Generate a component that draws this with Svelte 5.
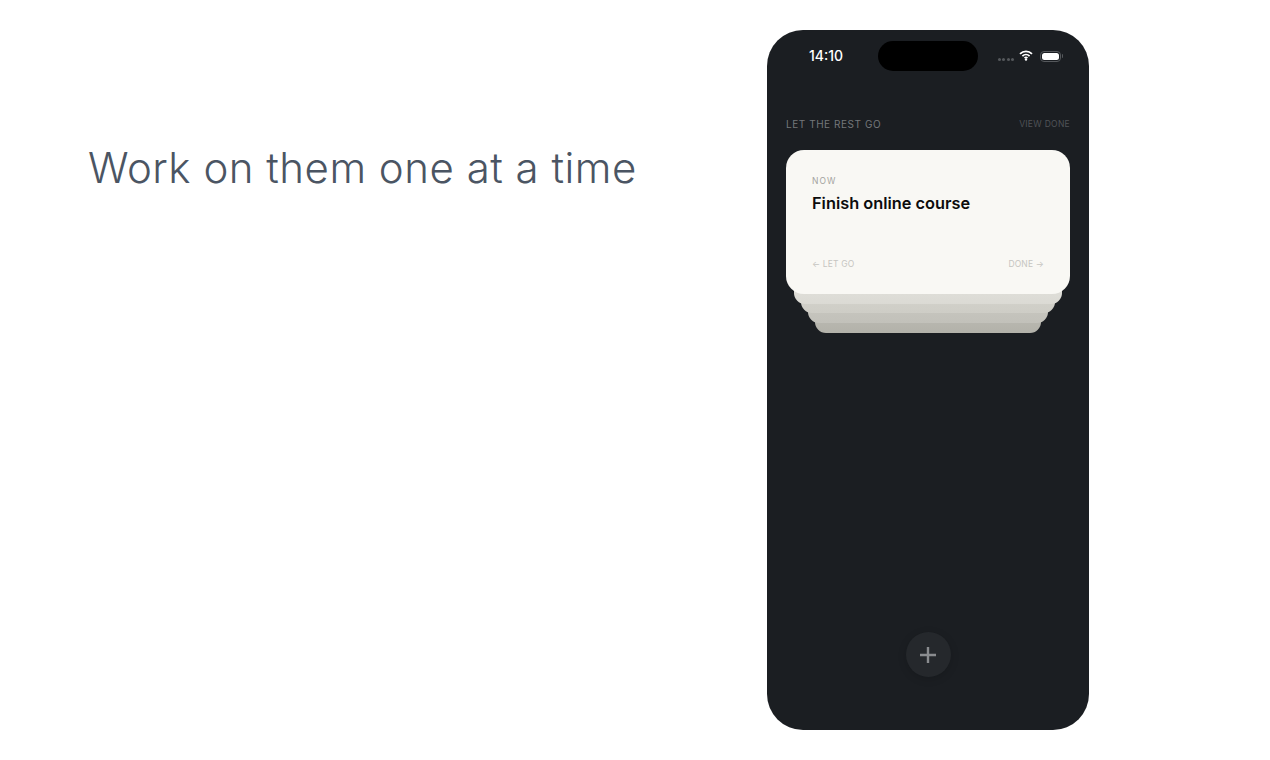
<script lang="ts">
  const layers = [
    { inset: 8, from: '#e4e3dd', to: '#dbdad4' },
    { inset: 15, from: '#d6d5ce', to: '#cecdc6' },
    { inset: 22, from: '#cac9c2', to: '#c2c1ba' },
    { inset: 29, from: '#bebdb6', to: '#b3b2aa' }
  ];
</script>

<div class="page">
  <section class="intro">
    <h1>Work on them one at a time</h1>
  </section>

  <div class="phone">
    <div class="status">
      <span class="time">14:10</span>
      <div class="island"></div>
      <div class="status-icons">
        <span class="signal"><i></i><i></i><i></i><i></i></span>
        <svg class="wifi" viewBox="0 0 14 11" aria-hidden="true">
          <path d="M1 3.8a8.6 8.6 0 0 1 12 0" />
          <path d="M3.4 6.1a5.2 5.2 0 0 1 7.2 0" />
          <path d="M5.6 8.2a2 2 0 0 1 2.8 0" />
          <circle cx="7" cy="9.6" r="1.2" />
        </svg>
        <span class="battery"><span class="level"></span></span>
      </div>
    </div>

    <div class="head">
      <span class="title">LET THE REST GO</span>
      <span class="view-done">VIEW DONE</span>
    </div>

    <div class="stack">
      <div class="card">
        <div class="label">NOW</div>
        <div class="task">Finish online course</div>
        <div class="actions">
          <span>← LET GO</span>
          <span>DONE →</span>
        </div>
      </div>
      {#each layers as layer, i}
        <div class="layer" style="margin-inline: {layer.inset}px; background: linear-gradient({layer.from}, {layer.to}); z-index: {4 - i}"></div>
      {/each}
    </div>

    <button class="add" aria-label="Add">
      <svg viewBox="0 0 16 16" aria-hidden="true"><path d="M8 0v16M0 8h16" /></svg>
    </button>
  </div>
</div>

<style>
  :global(body) {
    margin: 0;
    background: #fff;
  }

  .page {
    display: flex;
    justify-content: space-between;
    align-items: flex-start;
    width: 1270px;
    height: 760px;
    padding: 30px 181px 30px 88px;
    box-sizing: border-box;
    font-family: Inter, "Liberation Sans", sans-serif;
    overflow: hidden;
  }

  .intro {
    padding-top: 112px;
  }

  h1 {
    margin: 0;
    font-size: 42px;
    line-height: 52px;
    font-weight: 260;
    letter-spacing: 0.5px;
    color: #4b5563;
    white-space: nowrap;
  }

  .phone {
    width: 322px;
    height: 700px;
    flex-shrink: 0;
    background: #1b1e22;
    border-radius: 36px;
    padding: 11px 19px 53px;
    box-sizing: border-box;
    display: flex;
    flex-direction: column;
    overflow: hidden;
  }

  .status {
    display: grid;
    grid-template-columns: 1fr 100px 1fr;
    align-items: center;
    height: 30px;
    margin-inline: -19px;
  }

  .time {
    justify-self: start;
    margin-left: 42px;
    margin-top: -1px;
    font-size: 14px;
    font-weight: 500;
    color: #fff;
  }

  .island {
    height: 30px;
    border-radius: 15px;
    background: #000;
  }

  .status-icons {
    display: flex;
    align-items: center;
    justify-content: flex-end;
    gap: 5px;
    padding-right: 28px;
  }

  .signal {
    display: flex;
    gap: 1.5px;
    margin-top: 6px;
  }

  .signal i {
    width: 3px;
    height: 3px;
    border-radius: 50%;
    background: #55585c;
  }

  .wifi {
    width: 14px;
    height: 11px;
    margin-top: -2px;
    fill: none;
    stroke: #fff;
    stroke-width: 1.8;
  }

  .wifi circle {
    fill: #fff;
    stroke: none;
  }

  .battery {
    width: 21px;
    height: 11px;
    box-sizing: border-box;
    border: 1px solid #55585c;
    border-radius: 4px;
    padding: 1px;
    display: flex;
    position: relative;
    margin-left: 2px;
  }

  .battery::after {
    content: "";
    position: absolute;
    right: -3px;
    top: 2.5px;
    width: 1.5px;
    height: 4px;
    border-radius: 0 1px 1px 0;
    background: #55585c;
  }

  .level {
    flex: 1;
    border-radius: 2.5px;
    background: #fff;
  }

  .head {
    display: flex;
    justify-content: space-between;
    align-items: center;
    margin-top: 47px;
    height: 12px;
  }

  .title {
    font-size: 10px;
    letter-spacing: 0.55px;
    color: #74777a;
  }

  .view-done {
    font-size: 8.5px;
    letter-spacing: 0.3px;
    color: #505357;
  }

  .stack {
    margin-top: 20px;
    display: flex;
    flex-direction: column;
  }

  .card {
    position: relative;
    z-index: 5;
    height: 144px;
    background: #f9f8f4;
    border-radius: 18px;
    padding: 25px 26px 0;
    box-sizing: border-box;
    display: flex;
    flex-direction: column;
  }

  .label {
    font-size: 8.5px;
    line-height: 12px;
    letter-spacing: 1px;
    color: #a3a29e;
  }

  .task {
    margin-top: 4px;
    font-size: 16.35px;
    line-height: 24px;
    font-weight: 570;
    color: #0c0c0c;
  }

  .actions {
    display: flex;
    justify-content: space-between;
    margin-top: 43px;
    font-size: 8.5px;
    line-height: 12px;
    letter-spacing: 0.15px;
    color: #c6c5c1;
  }

  .layer {
    position: relative;
    height: 30px;
    margin-top: -20.3px;
    border-radius: 0 0 11px 11px;
  }

  .add {
    margin: auto auto 0;
    width: 45px;
    height: 45px;
    padding: 0;
    border: none;
    border-radius: 50%;
    background: #25282c;
    box-shadow: 0 2px 8px rgba(0, 0, 0, 0.15);
    display: flex;
    align-items: center;
    justify-content: center;
  }

  .add svg {
    width: 16px;
    height: 16px;
    fill: none;
    stroke: #8a8c8f;
    stroke-width: 2.4;
  }
</style>
